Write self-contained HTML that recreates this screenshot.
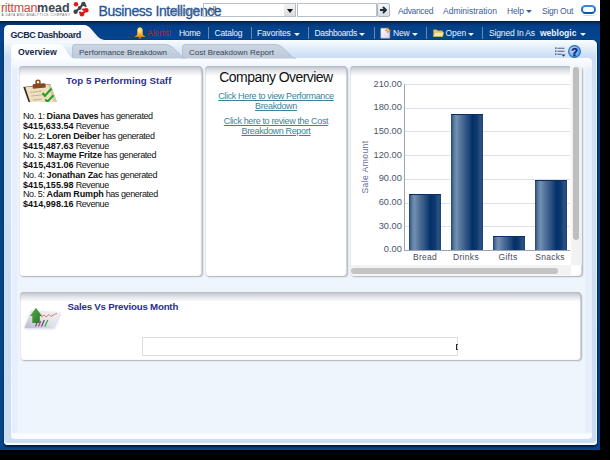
<!DOCTYPE html>
<html><head><meta charset="utf-8">
<style>
*{margin:0;padding:0;box-sizing:border-box}
html,body{width:610px;height:460px;overflow:hidden;background:#000;font-family:"Liberation Sans",sans-serif}
.a{position:absolute;white-space:nowrap}
#win{position:absolute;left:0;top:0;width:600px;height:450px;background:#06448a;overflow:hidden}
#hdr{position:absolute;left:0;top:0;width:600px;height:21px;background:#fff}
#nav{position:absolute;left:0;top:21px;width:600px;height:19px;background:linear-gradient(#08182e 0,#052c60 1.5px,#04408a 5px,#04468e 19px)}
.hl{position:absolute;top:5.5px;font-size:8.5px;color:#3a5c9a;line-height:10px;white-space:nowrap}
.nt{position:absolute;top:28px;font-size:8.5px;color:#eef2fa;white-space:nowrap;line-height:10px}
.sep{position:absolute;top:27px;width:1px;height:12px;background:#6c88aa}
.arr{position:absolute;top:33px;width:0;height:0;border-left:3px solid transparent;border-right:3px solid transparent;border-top:3px solid #eef2fa}
#outer{position:absolute;left:4px;top:40px;width:593px;height:405px;border-radius:0 5px 4px 4px;background:linear-gradient(#fbfdff 0,#e8f1fb 6px,#cbdef6 17px,#d1e1f4 60px,#cadcf0);box-shadow:inset 0 -2px 1px rgba(255,255,255,.95),inset -1px 0 0 rgba(235,242,250,.9),0 1.5px 2px #001a40,1px 0 1px #02306a}
#inner{position:absolute;left:11px;top:58px;width:581px;height:381px;border-radius:4px;background:linear-gradient(#fbfdff,#f4f8fe 6px,rgba(238,245,253,0) 12px,rgba(238,245,253,0) 374px,#fafcff 376px),linear-gradient(90deg,#f4f9ff 0,#f4f9ff 1px,#e6effb 1.5px,#e6effb 6px,#eef5fd 7px,#eef5fd calc(100% - 7px),#e5eefa calc(100% - 6px),#e5eefa 100%)}
.panel{position:absolute;background:linear-gradient(#b9bdc7,#dcdfe4 4px,#fff 10px);border-radius:4px;box-shadow:1px 1px 1.5px rgba(0,0,0,.28), inset 1px 0 1px rgba(150,160,175,.25), inset -1px 0 1px rgba(120,130,145,.35)}
.panel .shade{display:none}
.bt{position:absolute;left:23px;font-size:9px;color:#111;white-space:nowrap;line-height:10px;letter-spacing:-0.42px}
.bt b{letter-spacing:-0.15px}
.bt b.m{letter-spacing:0.05px}
.lk{position:absolute;font-size:9px;color:#3a8499;text-decoration:underline;white-space:nowrap;line-height:10px;letter-spacing:-0.35px;text-align:center}
.yl{position:absolute;left:352px;width:50px;text-align:right;font-size:9.3px;color:#50566a;line-height:10px;letter-spacing:0.02px}
.gl{position:absolute;left:405px;width:165px;height:1px;background:#dfe1ea}
.bar{position:absolute;width:32px;background:linear-gradient(90deg,#1f4577 0%,#5b7aa0 9%,#7390b0 17%,#4d6d96 34%,#284e80 52%,#04316a 67%,#0c396f 80%,#2b5182 92%,#1b4273 100%);box-shadow:inset 0 1px 0 #0a2e60}
.xl{position:absolute;top:252px;font-size:8.5px;color:#474b5a;line-height:10px;letter-spacing:0.3px;text-align:center;width:40px}
</style></head><body>
<div id="win">
  <div id="hdr">
    <div class="a" style="left:1px;top:0.5px;font-size:12.5px;line-height:15px;color:#e2403c"><span style="letter-spacing:-0.3px">rittman</span><b style="color:#3c4852;letter-spacing:-0.05px">mead</b></div>
    <div class="a" style="left:1.5px;top:13.5px;font-size:3.3px;letter-spacing:0.5px;color:#6a6a6a;line-height:3px">A DATA AND ANALYTICS COMPANY</div>
    <svg class="a" style="left:72px;top:1px" width="17" height="17" viewBox="0 0 17 17">
      <g stroke="#3c4650" stroke-width="2.2" stroke-linecap="round"><line x1="11.4" y1="2.7" x2="7.7" y2="7"/><line x1="7.7" y1="7" x2="3.6" y2="10.7"/><line x1="11.4" y1="2.7" x2="13.5" y2="5"/></g>
      <circle cx="11.4" cy="2.9" r="2.2" fill="#3c4650"/><circle cx="7.7" cy="7" r="1.9" fill="#3c4650"/><circle cx="3.6" cy="10.7" r="2.2" fill="#3c4650"/>
      <g stroke="#e01818" stroke-width="2.2" stroke-linecap="round"><line x1="14.3" y1="9.2" x2="9.9" y2="13.3"/><line x1="11" y1="8.5" x2="14.3" y2="9.2"/><line x1="9.9" y1="13.3" x2="8" y2="11.5"/></g>
      <circle cx="4" cy="3.3" r="2.2" fill="#e01818"/><circle cx="14.3" cy="9.2" r="2.3" fill="#e01818"/><circle cx="9.9" cy="13.3" r="2.3" fill="#e01818"/>
    </svg>
    <div class="a" style="left:98.5px;top:2.5px;font-size:14px;letter-spacing:-0.42px;line-height:16px;color:#245496;-webkit-text-stroke:0.3px #245496">Business Intelligence</div>
    <div class="a" style="left:172px;top:5.5px;font-size:9px;color:#6a7f9c;line-height:10px;letter-spacing:-0.3px">Search</div>
    <div class="a" style="left:203px;top:3px;width:93px;height:14px;border:1px solid #b8bec6"></div>
    <div class="a" style="left:207px;top:5px;font-size:8.5px;color:#555;line-height:10px">All</div>
    <div class="a" style="left:284px;top:4px;width:11px;height:12px;background:linear-gradient(#f4f4f4,#dcdcdc)"></div>
    <div class="a" style="left:287px;top:9px;width:0;height:0;border-left:3px solid transparent;border-right:3px solid transparent;border-top:4px solid #111"></div>
    <div class="a" style="left:297px;top:3px;width:80px;height:14px;border:1px solid #b8bec6;background:#fff"></div>
    <div class="a" style="left:377px;top:3px;width:13px;height:14px;border:1px solid #aab4c2;border-radius:2px;background:linear-gradient(#f8f8f8,#d8dde4)"></div>
    <svg class="a" style="left:379px;top:5px" width="9" height="10" viewBox="0 0 9 10"><path d="M1 5H6M4 2L7 5L4 8" stroke="#1d2a3c" stroke-width="1.8" fill="none"/></svg>
    <div class="hl" style="left:398px;letter-spacing:-0.35px">Advanced</div>
    <div class="hl" style="left:443px">Administration</div>
    <div class="hl" style="left:507px;letter-spacing:-0.2px">Help</div>
    <div class="a" style="left:525.5px;top:10px;width:0;height:0;border-left:3px solid transparent;border-right:3px solid transparent;border-top:3px solid #3a5c9a"></div>
    <div class="hl" style="left:542px;letter-spacing:-0.25px">Sign Out</div>
    <div class="a" style="left:581px;top:5.3px;width:15px;height:8.8px;border:2px solid #1f70d0;border-top-color:#3a86dc;border-bottom-color:#0a56b8;border-bottom-width:2.6px;border-radius:4.5px"></div>
    <div class="a" style="left:582px;top:14.5px;width:13px;height:3.5px;border-radius:50%;border-top:1.5px solid #c4d8f0"></div>
  </div>
  <div id="nav"></div>
  <!-- nav items -->
  <svg class="a" style="left:133.5px;top:27px" width="12" height="12" viewBox="0 0 12 12"><defs><radialGradient id="bg1" cx="0.45" cy="0.3" r="0.7"><stop offset="0" stop-color="#fff4b0"/><stop offset="0.5" stop-color="#f4c040"/><stop offset="1" stop-color="#d88a10"/></radialGradient></defs><path d="M6 0.3C4.2 0.3 3.3 1.6 3.3 3.6V6.8Q3.3 8.2 0.8 9.6L0.5 10H11.5L11.2 9.6Q8.7 8.2 8.7 6.8V3.6C8.7 1.6 7.8 0.3 6 0.3Z" fill="url(#bg1)"/><ellipse cx="6" cy="10.8" rx="1.4" ry="1" fill="#c07810"/></svg>
  <div class="nt" style="left:147px;color:#d41828">Alerts!</div>
  <div class="nt" style="left:179px;letter-spacing:-0.3px">Home</div>
  <div class="sep" style="left:208px"></div>
  <div class="nt" style="left:214.5px;letter-spacing:-0.2px">Catalog</div>
  <div class="sep" style="left:251px"></div>
  <div class="nt" style="left:257px;letter-spacing:-0.15px">Favorites</div>
  <div class="arr" style="left:294px"></div>
  <div class="sep" style="left:308px"></div>
  <div class="nt" style="left:314.5px;letter-spacing:-0.35px">Dashboards</div>
  <div class="arr" style="left:359px"></div>
  <div class="sep" style="left:374px"></div>
  <svg class="a" style="left:380px;top:27px" width="12" height="12" viewBox="0 0 12 12"><defs><linearGradient id="pg" x1="0" y1="0" x2="1" y2="1"><stop offset="0" stop-color="#ffffff"/><stop offset="1" stop-color="#d8d0ec"/></linearGradient></defs><path d="M0.8 1.2H7.5L9.8 3.5V11.2H0.8Z" fill="url(#pg)" stroke="#a8a4c0" stroke-width="0.5"/><path d="M8 0L9.1 2.4L11.6 3.3L9.1 4.2L8 6.6L6.9 4.2L4.4 3.3L6.9 2.4Z" fill="#ee7a18"/><circle cx="8" cy="3.3" r="1.1" fill="#ffd860"/></svg>
  <div class="nt" style="left:393px;letter-spacing:-0.2px">New</div>
  <div class="arr" style="left:412px"></div>
  <div class="sep" style="left:426px"></div>
  <svg class="a" style="left:432.5px;top:28.5px" width="11" height="8" viewBox="0 0 11 8"><path d="M0.4 0.8H3.8L4.8 1.8H9.6V7.6H0.4Z" fill="#e8d070" stroke="#b09038" stroke-width="0.6"/><path d="M0.4 7.6L2 3.2H10.8L9.6 7.6Z" fill="#f8e8a0" stroke="#c0a040" stroke-width="0.5"/></svg>
  <div class="nt" style="left:445.5px">Open</div>
  <div class="arr" style="left:468px"></div>
  <div class="sep" style="left:482px"></div>
  <div class="nt" style="left:489px;letter-spacing:-0.15px">Signed In As</div>
  <div class="nt" style="left:540px;font-weight:bold">weblogic</div>
  <div class="arr" style="left:579.5px"></div>

  <div id="outer"></div>
  <!-- GCBC tab -->
  <svg class="a" style="left:4px;top:25px" width="102" height="16" viewBox="0 0 102 16"><path d="M0 16V5Q0 0 5 0H80Q84 0 88 5L94 12Q97 15 102 15.5V16Z" fill="url(#gt)"/><defs><linearGradient id="gt" x1="0" y1="0" x2="0" y2="1"><stop offset="0" stop-color="#ffffff"/><stop offset="1" stop-color="#f2f6fc"/></linearGradient></defs></svg>
  <div class="a" style="left:10.5px;top:30px;font-size:9px;font-weight:bold;color:#14284a;line-height:10px;letter-spacing:-0.4px">GCBC Dashboard</div>
  <div id="inner"></div>
  <!-- sub tabs -->
  <svg class="a" style="left:72px;top:43.5px" width="114" height="15" viewBox="0 0 114 15"><defs><linearGradient id="st" x1="0" y1="0" x2="0" y2="1"><stop offset="0" stop-color="#cdd7e4"/><stop offset="1" stop-color="#bcc9db"/></linearGradient></defs><path d="M0 14.5V4Q0 0 4 0H92Q97 0 101 3.5L107 9.5Q110 13.5 114 14.5Z" fill="url(#st)"/><path d="M0.4 14.5V4Q0.4 0.4 4 0.4H92Q97 0.4 101 3.8L107 9.8Q110 13.7 114 14.5" fill="none" stroke="#afbccd" stroke-width="0.8"/></svg>
  <svg class="a" style="left:182px;top:43.5px" width="114" height="15" viewBox="0 0 114 15"><path d="M0 14.5V4Q0 0 4 0H92Q97 0 101 3.5L107 9.5Q110 13.5 114 14.5Z" fill="url(#st)"/><path d="M0.4 14.5V4Q0.4 0.4 4 0.4H92Q97 0.4 101 3.8L107 9.8Q110 13.7 114 14.5" fill="none" stroke="#afbccd" stroke-width="0.8"/></svg>
  <svg class="a" style="left:11px;top:44px" width="64" height="15" viewBox="0 0 64 15"><path d="M0 15V4Q0 0 4 0H48Q51 0 53 3L58 11Q60 14 64 15Z" fill="#fbfdff"/></svg>
  <div class="a" style="left:18px;top:47.2px;font-size:8.7px;font-weight:bold;color:#14284a;line-height:10px">Overview</div>
  <div class="a" style="left:79px;top:47.5px;font-size:8px;color:#3c4450;line-height:10px">Performance Breakdown</div>
  <div class="a" style="left:189px;top:47.5px;font-size:8px;color:#3c4450;line-height:10px">Cost Breakdown Report</div>
  <!-- list + help icons -->
  <svg class="a" style="left:555px;top:47px" width="11" height="10" viewBox="0 0 11 10"><g fill="#2a3a5a"><rect x="0" y="0.5" width="1.5" height="1.2"/><rect x="2.5" y="0.8" width="7" height="0.8"/><rect x="0" y="3.5" width="1.5" height="1.2"/><rect x="2.5" y="3.8" width="7" height="0.8"/><rect x="0" y="6.5" width="1.5" height="1.2"/><rect x="2.5" y="6.8" width="4" height="0.8"/><path d="M6.5 7.5H10.5L8.5 9.8Z"/></g></svg>
  <svg class="a" style="left:568px;top:44.5px" width="13" height="13" viewBox="0 0 13 13"><defs><radialGradient id="hg" cx="0.4" cy="0.35" r="0.7"><stop offset="0" stop-color="#cfe6fc"/><stop offset="0.6" stop-color="#7ab8f0"/><stop offset="1" stop-color="#3a88dc"/></radialGradient></defs><circle cx="6.5" cy="6.5" r="5.9" fill="url(#hg)" stroke="#2a6cc4" stroke-width="1.1"/><text x="6.6" y="10.5" text-anchor="middle" font-family="Liberation Sans" font-weight="bold" font-size="11" fill="#0a2a80" stroke="#0a2a80" stroke-width="0.5">?</text></svg>

  <!-- panel 1 -->
  <div class="panel" style="left:19px;top:66px;width:183px;height:210px"><div class="shade"></div></div>
  <svg class="a" style="left:20px;top:76px" width="40" height="26" viewBox="0 0 40 26">
    <path d="M3.3 11.1L30.2 8.2L36.7 26L8.5 26Z" fill="#3a2a1a"/>
    <path d="M5.2 11.3L30.2 8.6L36.7 26L10.2 26Z" fill="#efe0c2"/>
    <path d="M28 9L30.2 8.6L36.7 26L33.5 26Z" fill="#d8c8a8"/>
    <path d="M10 16.5L22 15M11.3 20L23 18.8M12.8 24L22 23" stroke="#b4a688" stroke-width="0.8"/>
    <path d="M12.5 9.5Q12.5 8 14 8L24 7.3Q25.4 7.3 25.6 8.6L25.8 11.5L13 12.7Z" fill="#8a4620"/>
    <circle cx="18" cy="6.3" r="2" fill="none" stroke="#8a4620" stroke-width="1.5"/>
    <path d="M22.6 17L24.9 19.9L31.5 12.5" stroke="#22a022" stroke-width="2.1" fill="none"/>
    <path d="M25.2 23.4L27.5 25.6L33.4 19.3" stroke="#22a022" stroke-width="2.1" fill="none"/>
  </svg>
  <div class="a" style="left:66px;top:76px;font-size:9.7px;font-weight:bold;color:#2d3192;line-height:10px;letter-spacing:0.08px">Top 5 Performing Staff</div>
  <div class="bt" style="top:111.2px">No. 1: <b>Diana Daves</b> has generated</div>
  <div class="bt" style="top:121.0px"><b class="m">$415,633.54</b> Revenue</div>
  <div class="bt" style="top:130.8px">No. 2: <b>Loren Deiber</b> has generated</div>
  <div class="bt" style="top:140.5px"><b class="m">$415,487.63</b> Revenue</div>
  <div class="bt" style="top:150.2px">No. 3: <b>Mayme Fritze</b> has generated</div>
  <div class="bt" style="top:160.0px"><b class="m">$415,431.06</b> Revenue</div>
  <div class="bt" style="top:169.8px">No. 4: <b>Jonathan Zac</b> has generated</div>
  <div class="bt" style="top:179.5px"><b class="m">$415,155.98</b> Revenue</div>
  <div class="bt" style="top:189.2px">No. 5: <b>Adam Rumph</b> has generated</div>
  <div class="bt" style="top:199.0px"><b class="m">$414,998.16</b> Revenue</div>

  <!-- panel 2 -->
  <div class="panel" style="left:205px;top:66px;width:142px;height:210px"><div class="shade"></div></div>
  <div class="a" style="left:205px;width:142px;text-align:center;top:69.5px;font-size:14px;color:#111;line-height:15px;letter-spacing:-0.55px">Company Overview</div>
  <div class="lk" style="left:205px;width:142px;top:90.5px">Click Here to view Performance<br>Breakdown</div>
  <div class="lk" style="left:205px;width:142px;top:116px">Click here to review the Cost<br>Breakdown Report</div>

  <!-- panel 3 chart -->
  <div class="panel" style="left:350px;top:66px;width:232px;height:210px"><div class="shade"></div></div>
  <div class="yl" style="top:78.5px">210.00</div>
  <div class="yl" style="top:102.2px">180.00</div>
  <div class="yl" style="top:125.9px">150.00</div>
  <div class="yl" style="top:149.6px">120.00</div>
  <div class="yl" style="top:173.3px">90.00</div>
  <div class="yl" style="top:197.0px">60.00</div>
  <div class="yl" style="top:220.7px">30.00</div>
  <div class="yl" style="top:244.4px">0.00</div>
  <div class="gl" style="top:84px"></div>
  <div class="gl" style="top:107.7px"></div>
  <div class="gl" style="top:131.4px"></div>
  <div class="gl" style="top:155.1px"></div>
  <div class="gl" style="top:178.8px"></div>
  <div class="gl" style="top:202.5px"></div>
  <div class="gl" style="top:226.2px"></div>
  <div class="a" style="left:404px;top:84px;width:1px;height:167px;background:#9ca2ba"></div>
  <div class="bar" style="left:409px;top:194px;height:56px"></div>
  <div class="bar" style="left:451px;top:114px;height:136px"></div>
  <div class="bar" style="left:493px;top:236px;height:14px"></div>
  <div class="bar" style="left:535px;top:180px;height:70px"></div>
  <div class="a" style="left:404px;top:250px;width:166px;height:1px;background:#9ca2ba"></div>
  <div class="xl" style="left:405px">Bread</div>
  <div class="xl" style="left:446px">Drinks</div>
  <div class="xl" style="left:488px">Gifts</div>
  <div class="xl" style="left:530px">Snacks</div>
  <div class="a" style="left:336px;top:161.5px;width:57px;text-align:center;transform:rotate(-90deg);font-size:8.5px;color:#6870a0;line-height:10px;letter-spacing:0.45px">Sale Amount</div>
  <div class="a" style="left:570px;top:66px;width:11.5px;height:199px;background:linear-gradient(90deg,#fff,#f2f2f2 2px,#f0f0f0)"></div>
  <div class="a" style="left:573px;top:67px;width:6px;height:173px;border-radius:3px;background:#bebebe"></div>
  <div class="a" style="left:351px;top:265px;width:220px;height:10px;background:#f2f2f2"></div>
  <div class="a" style="left:351px;top:268px;width:207px;height:6px;border-radius:3px;background:#c4c4c4"></div>

  <!-- bottom panel -->
  <div class="panel" style="left:20px;top:292px;width:561px;height:68px"><div class="shade"></div></div>
  <svg class="a" style="left:20px;top:302px" width="44" height="30" viewBox="0 0 44 30">
    <defs><linearGradient id="pp" x1="0" y1="1" x2="1" y2="0"><stop offset="0" stop-color="#b8bccb"/><stop offset="0.5" stop-color="#e2e3ea"/><stop offset="1" stop-color="#f4f4f6"/></linearGradient>
    <linearGradient id="ag" x1="0" y1="0" x2="1" y2="1"><stop offset="0" stop-color="#5aae4a"/><stop offset="1" stop-color="#2a7226"/></linearGradient>
    <filter id="bl"><feGaussianBlur stdDeviation="0.9"/></filter></defs>
    <path d="M11 9L41 11L34.5 27L4 27Z" fill="#b4bee0" opacity="0.6" filter="url(#bl)"/>
    <path d="M11.5 8.5L40.2 10.5L33.8 26L4.5 26Z" fill="url(#pp)"/>
    <path d="M21 15L24 13L26 15L29 12.5L31 14.5L34 12.5L37 11.5" stroke="#e86a58" stroke-width="0.9" fill="none"/>
    <path d="M15.5 24.5L17.5 19.5" stroke="#4a4aa0" stroke-width="1.1"/>
    <path d="M18.5 24.5L20.8 19" stroke="#d03070" stroke-width="1.1"/>
    <path d="M21.5 24.5L24.3 18" stroke="#5a3a90" stroke-width="1.1"/>
    <path d="M24.8 24.5L27.8 18" stroke="#30a040" stroke-width="1.1"/>
    <path d="M15.9 5.8L22 14L19.8 14L19.8 21L12.3 21L12.3 14L10.1 14Z" fill="url(#ag)"/>
  </svg>
  <div class="a" style="left:67.5px;top:302px;font-size:9.7px;font-weight:bold;color:#28308a;line-height:10px;letter-spacing:-0.2px">Sales Vs Previous Month</div>
  <div class="a" style="left:142px;top:337px;width:316px;height:19px;border:1px solid #dadcdf;background:#fff"></div>
  <div class="a" style="left:455.5px;top:344px;width:2px;height:6px;border-left:1.6px solid #222;border-top:1px solid #444;border-bottom:1px solid #444"></div>
</div>
</body></html>
